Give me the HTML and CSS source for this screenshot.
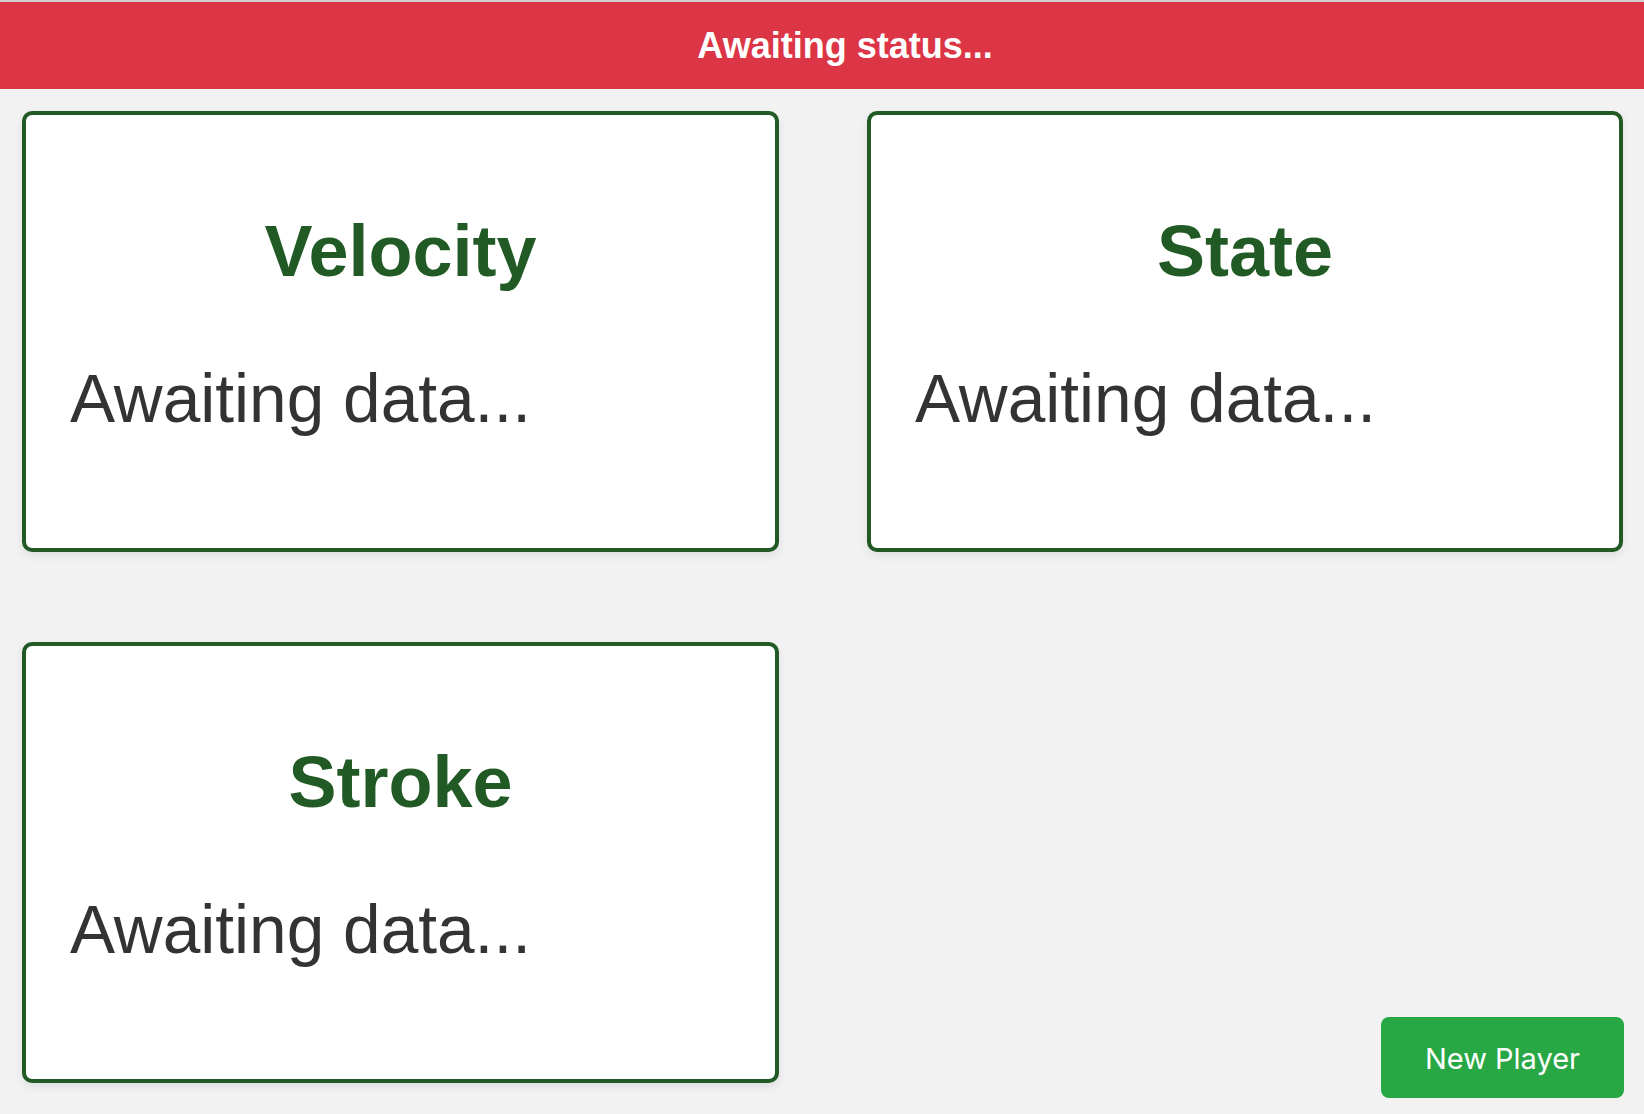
FILE: index.html
```html
<!DOCTYPE html>
<html>
<head>
<meta charset="utf-8">
<title>Player Status</title>
<link rel="stylesheet" href="styles.css">
</head>
<body>
<div class="banner">Awaiting status...</div>
<main class="grid">
  <section class="card">
    <h2 class="card-title">Velocity</h2>
    <p class="card-value">Awaiting data...</p>
  </section>
  <section class="card">
    <h2 class="card-title">State</h2>
    <p class="card-value">Awaiting data...</p>
  </section>
  <section class="card">
    <h2 class="card-title">Stroke</h2>
    <p class="card-value">Awaiting data...</p>
  </section>
</main>
<button class="new-player">New Player</button>
</body>
</html>
```
FILE: styles.css
```css
html, body {
  margin: 0;
  padding: 0;
}
body {
  background: #f2f2f2;
  font-family: "Liberation Sans", Arial, sans-serif;
  border-top: 2px solid #cfcfcf;
  height: 1112px;
  overflow: hidden;
}
.banner {
  background: #dc3545;
  color: #fff;
  font-weight: bold;
  font-size: 36px;
  height: 87px;
  line-height: 87px;
  text-align: center;
  padding-left: 46px;
}
.grid {
  display: grid;
  grid-template-columns: 757px 756px;
  column-gap: 88px;
  row-gap: 90px;
  padding: 22px 0 0 22px;
}
.card {
  box-sizing: border-box;
  height: 441px;
  background: #fff;
  border: 4px solid #215a24;
  border-radius: 10px;
  box-shadow: 0 4px 10px rgba(0, 0, 0, 0.08);
  padding: 95px 20px 0 44px;
}
.card-title {
  margin: 0 0 68px -24px;
  font-size: 72px;
  line-height: 82px;
  font-weight: bold;
  color: #215a24;
  text-align: center;
}
.card-value {
  margin: 0;
  font-size: 67.6px;
  line-height: 77px;
  color: #333;
}
.new-player {
  position: fixed;
  right: 20px;
  bottom: 16px;
  width: 243px;
  height: 81px;
  padding-top: 3px;
  background: #28a745;
  color: #fff;
  border: none;
  border-radius: 8px;
  font-family: Inter, "Noto Sans", sans-serif;
  font-size: 29px;
  cursor: pointer;
}
```
